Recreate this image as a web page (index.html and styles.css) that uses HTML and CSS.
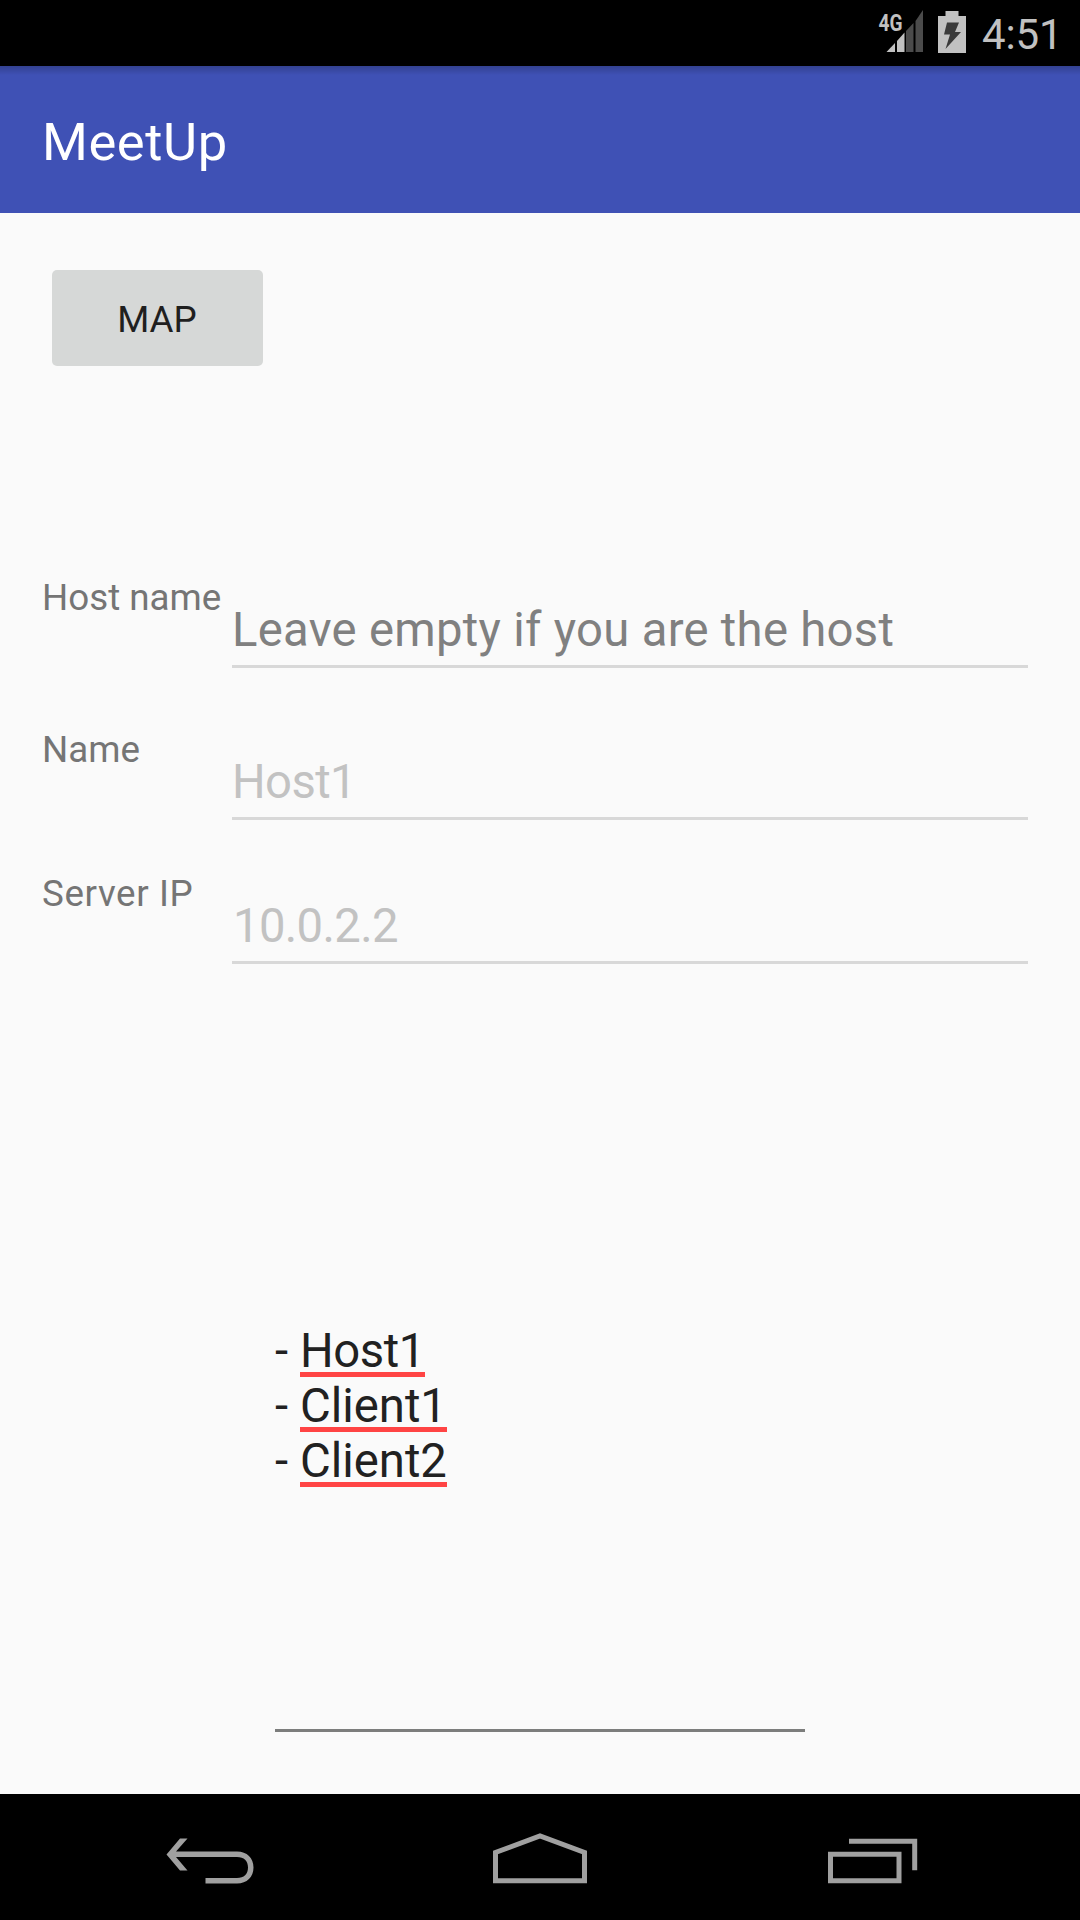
FILE: index.html
```html
<!DOCTYPE html>
<html lang="en">
<head>
<meta charset="utf-8">
<title>MeetUp</title>
<link rel="stylesheet" href="styles.css">
</head>
<body>
<div class="screen">
  <div class="status-bar">
    <svg class="signal" width="46" height="46" viewBox="0 0 46 46">
      <path d="M8.500 42L17 33V42Z" fill="#c1c1c1"/>
      <path d="M19 31L26.500 22.500V42H19Z" fill="#c1c1c1"/>
      <path d="M28 21L35.500 13V42H28Z" fill="#4b4b4b"/>
      <path d="M37.500 11L45 0V42H37.500Z" fill="#4b4b4b"/>
      <text class="network" x="0.500" y="20.500" textLength="24" lengthAdjust="spacingAndGlyphs">4G</text>
    </svg>
    <svg class="battery" width="28" height="42" viewBox="0 0 28 42">
      <path d="M7.500 0H20.500V5H28V42H0V5H7.500Z" fill="#c1c1c1"/>
      <path d="M9 11.500H21L17 21H23L7.500 38L12 23.500H6Z" fill="#3a3a3a"/>
    </svg>
    <span class="clock">4:51</span>
  </div>
  <header class="app-bar"><h1 class="title">MeetUp</h1></header>
  <main class="content">
    <button class="map-button">MAP</button>
    <div class="form">
      <div class="row row-host">
        <span class="label">Host name</span>
        <div class="field hint">Leave empty if you are the host</div>
      </div>
      <div class="row row-name">
        <span class="label">Name</span>
        <div class="field name">Host1</div>
      </div>
      <div class="row">
        <span class="label label-ip">Server IP</span>
        <div class="field ip">10.0.2.2</div>
      </div>
    </div>
    <div class="members">
      <div class="member"><span class="dash">-</span><span class="typo host">Host1</span></div>
      <div class="member"><span class="dash">-</span><span class="typo">Client1</span></div>
      <div class="member"><span class="dash">-</span><span class="typo">Client2</span></div>
    </div>
  </main>
  <nav class="nav-bar">
    <svg class="nav-icon" width="140" height="126" viewBox="0 0 140 126">
      <path d="M26.500 60.500L40 44.500H47.500L36 57.500H97C107 57.500 113.500 64 113.500 73.500S107 89.500 97 89.500H65.500V84H97C104 84 108 80 108 73.500S104 63 97 63H36L47.500 76.500H40Z" fill="#a0a0a0"/>
    </svg>
    <svg class="nav-icon" width="140" height="126" viewBox="0 0 140 126">
      <path d="M25.500 86.800V58.500L70 42L114.500 58.500V86.800Z" fill="none" stroke="#a0a0a0" stroke-width="5"/>
    </svg>
    <svg class="nav-icon" width="140" height="126" viewBox="0 0 140 126">
      <path d="M30.500 60.300H99V86.800H30.500ZM49 47.200H114.700V76.300" fill="none" stroke="#a0a0a0" stroke-width="5"/>
    </svg>
  </nav>
</div>
</body>
</html>
```
FILE: styles.css
```css
* { box-sizing: border-box; }
body { margin: 0; background: #fafafa; font-family: Roboto, sans-serif; }
.screen { width: 1080px; height: 1920px; display: flex; flex-direction: column; overflow: hidden; }
.status-bar { height: 66px; flex: none; background: #000; display: flex; justify-content: flex-end; align-items: flex-start; padding: 10px 21px 0 0; }
.signal { margin-right: 14px; }
.network { font: 700 23.5px Roboto, sans-serif; fill: #c1c1c1; }
.battery { margin: 1px 16px 0 0; }
.clock { width: 77px; margin-top: -1px; font-size: 42px; line-height: 52px; letter-spacing: -0.1px; color: #c1c1c1; text-align: right; white-space: nowrap; }
.app-bar { height: 147px; flex: none; background: linear-gradient(rgba(0, 0, 0, .2), transparent 9px) #3f51b5; display: flex; align-items: center; padding: 5px 0 0 42px; }
.title { margin: 0; color: #fff; font-size: 52.5px; font-weight: 400; line-height: 62px; letter-spacing: .6px; }
.content { flex: 1; display: flex; flex-direction: column; padding: 57px 52px 0 42px; }
.map-button { width: 211px; height: 96px; flex: none; margin-left: 10px; padding: 3px 1px 0 0; border: 0; border-radius: 5px; background: #d6d8d7; color: #1f1f1f; font: 36.75px/44px Roboto, sans-serif; }
.form { margin-top: 206px; }
.row { display: grid; grid-template-columns: 190px 1fr; height: 96px; }
.row-host { margin-bottom: 56px; }
.row-name { margin-bottom: 48px; }
.label { padding-top: 1px; font-size: 36.75px; line-height: 50px; color: #757575; white-space: nowrap; }
.label-ip { letter-spacing: .6px; }
.field { height: 96px; padding-top: 30px; border-bottom: 3px solid #d8d8d8; font-size: 47.25px; line-height: 56px; color: #c2c2c2; white-space: nowrap; }
.hint { color: #808080; letter-spacing: .29px; }
.name { letter-spacing: -.6px; }
.ip { padding-left: 1px; letter-spacing: -.65px; }
.members { width: 530px; height: 409px; margin: 359px 0 0 233px; padding-top: 1px; border-bottom: 3px solid #7c7d7c; color: #212121; font-size: 47.25px; line-height: 55px; }
.member { display: flex; height: 55px; }
.dash { width: 25px; }
.typo { height: 53px; border-bottom: 5px solid #ff4444; }
.host { letter-spacing: -.45px; }
.nav-bar { height: 126px; flex: none; background: #000; display: flex; justify-content: space-between; padding: 0 140px; }
```
